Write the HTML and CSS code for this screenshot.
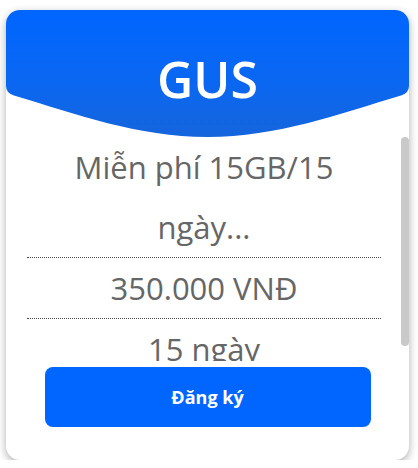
FILE: index.html
```html
<!DOCTYPE html>
<html lang="vi">
<head>
<meta charset="utf-8">
<link rel="stylesheet" href="styles.css">
</head>
<body>
<div class="page">
  <div class="card">
    <div class="card-head">
      <h2 class="card-title">GUS</h2>
    </div>
    <div class="card-body">
      <div class="scroll-content">
        <div class="item">Miễn phí 15GB/15 ngày...</div>
        <div class="item">350.000 VNĐ</div>
        <div class="item">15 ngày</div>
      </div>
      <div class="scroll-track"><div class="scroll-thumb"></div></div>
    </div>
    <button class="btn">Đăng ký</button>
  </div>
</div>
</body>
</html>
```

FILE: styles.css
```css
html, body {
  margin: 0;
  padding: 0;
  background: #ffffff;
}

.page {
  padding: 10px 9px 0 6px;
}

.card {
  width: 403px;
  height: 450px;
  background: #ffffff;
  border-radius: 14px;
  box-shadow: 0 3px 8px rgba(0, 0, 0, 0.32);
  overflow: hidden;
  display: flex;
  flex-direction: column;
  font-family: "Open Sans", "Noto Sans", sans-serif;
}

.card-head {
  height: 127px;
  flex: none;
  background: linear-gradient(180deg, #0066ff 0%, #0a67f2 55%, #1565dc 100%);
  clip-path: path("M0 0 H403 V76 Q403 83 395 85.5 C333 104 271.5 127 201.5 127 C131.5 127 70 104 8 85.5 Q0 83 0 76 Z");
  text-align: center;
  box-sizing: border-box;
  padding-top: 44px;
}

.card-title {
  margin: 0;
  color: #ffffff;
  font-size: 50px;
  line-height: 50px;
  font-weight: 600;
}

.card-body {
  height: 224px;
  flex: none;
  display: flex;
}

.scroll-content {
  flex: 1;
  min-width: 0;
  overflow: hidden;
}

.scroll-track {
  width: 8px;
  flex: none;
}

.scroll-thumb {
  height: 209px;
  background: #c9c9c9;
  border-radius: 4px;
}

.item {
  margin: 0 20px 0 21px;
  padding: 0 6px;
  text-align: center;
  color: #666666;
  font-size: 31px;
  font-weight: 500;
  line-height: 60px;
  border-bottom: 1px dotted #444444;
}

.item:last-child {
  border-bottom: none;
}

.btn {
  display: flex;
  align-items: center;
  justify-content: center;
  width: 326px;
  height: 60px;
  margin: 6px auto 0;
  flex: none;
  border: none;
  border-radius: 8px;
  background: #0066ff;
  color: #ffffff;
  font-family: "Open Sans", "Noto Sans", sans-serif;
  font-size: 18px;
  font-weight: 700;
  padding: 0;
}
```
